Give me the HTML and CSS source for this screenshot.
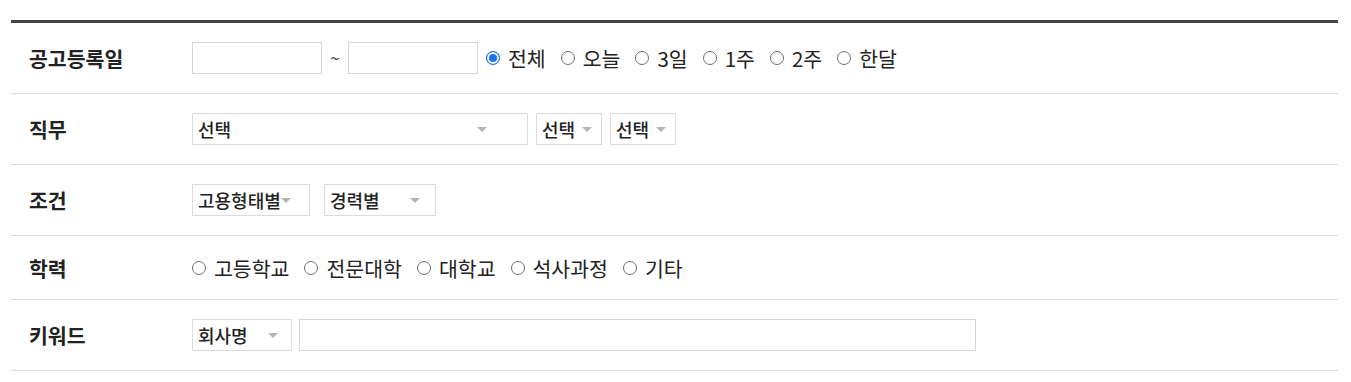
FILE: index.html
```html
<!DOCTYPE html>
<html lang="ko">
<head>
<meta charset="utf-8">
<title>채용공고 검색</title>
<link rel="stylesheet" href="styles.css">
</head>
<body>
<div class="wrap">
  <div class="search">
    <div class="row">
      <div class="label">공고등록일</div>
      <div class="field">
        <input class="date" type="text">
        <span class="tilde">~</span>
        <input class="date" type="text">
        <div class="radios">
          <label class="opt"><span class="radio on"></span>전체</label>
          <label class="opt"><span class="radio"></span>오늘</label>
          <label class="opt"><span class="radio"></span>3일</label>
          <label class="opt"><span class="radio"></span>1주</label>
          <label class="opt"><span class="radio"></span>2주</label>
          <label class="opt"><span class="radio"></span>한달</label>
        </div>
      </div>
    </div>
    <div class="row">
      <div class="label">직무</div>
      <div class="field gap8">
        <div class="select w-job"><span>선택</span><i class="arrow"></i></div>
        <div class="select w-sm"><span>선택</span><i class="arrow"></i></div>
        <div class="select w-sm"><span>선택</span><i class="arrow"></i></div>
      </div>
    </div>
    <div class="row">
      <div class="label">조건</div>
      <div class="field gap14">
        <div class="select w-type"><span>고용형태별</span><i class="arrow tight"></i></div>
        <div class="select w-career"><span>경력별</span><i class="arrow"></i></div>
      </div>
    </div>
    <div class="row short">
      <div class="label">학력</div>
      <div class="field">
        <div class="radios first">
          <label class="opt"><span class="radio"></span>고등학교</label>
          <label class="opt"><span class="radio"></span>전문대학</label>
          <label class="opt"><span class="radio"></span>대학교</label>
          <label class="opt"><span class="radio"></span>석사과정</label>
          <label class="opt"><span class="radio"></span>기타</label>
        </div>
      </div>
    </div>
    <div class="row">
      <div class="label">키워드</div>
      <div class="field gap7">
        <div class="select w-company"><span>회사명</span><i class="arrow"></i></div>
        <input class="keyword" type="text">
      </div>
    </div>
  </div>
</div>
</body>
</html>
```

FILE: styles.css
```css
* { box-sizing: border-box; }
html, body { margin: 0; padding: 0; background: #fff; }
body {
  font-family: "Noto Sans CJK KR", "Noto Sans", sans-serif;
  color: #222;
}
.wrap { padding: 20px 13px 0 11px; }
.search { border-top: 3px solid #444; }
.row {
  display: grid;
  grid-template-columns: 181px 1fr;
  align-items: center;
  padding: 19px 0;
  border-bottom: 1px solid #ddd;
  min-height: 71px;
}
.row.short { min-height: 64px; padding: 0; }
.label {
  padding-left: 18px;
  font-size: 20.5px;
  font-weight: 700;
  color: #222;
  line-height: 26px;
}
.field { display: flex; align-items: center; }
.gap8 { gap: 8px; }
.gap14 { gap: 14px; }
.gap7 { gap: 7px; }
input { font: inherit; margin: 0; outline: none; }
.date {
  width: 130px; height: 32px;
  border: 1px solid #d6d6d6;
  background: #fff;
}
.tilde {
  width: 26px; text-align: center;
  font-size: 17px; color: #333;
  line-height: 26px;
}
.radios { display: flex; align-items: center; margin-left: 8px; }
.radios.first { margin-left: 0; }
.opt {
  display: flex; align-items: center;
  font-size: 20.5px; color: #222;
  line-height: 26px;
  margin-right: 15px;
}
.radio {
  width: 14px; height: 14px;
  border: 1px solid #6e6e6e;
  border-radius: 50%;
  background: #fff;
  margin-right: 8px;
  flex: none;
}
.radio.on {
  border-color: #1a73e8;
  background: #1a73e8;
  box-shadow: inset 0 0 0 2px #fff;
}
.select {
  display: flex; align-items: center;
  height: 32px;
  border: 1px solid #dcdcdc;
  background: #fff;
  padding: 0 10px 0 5px;
  font-size: 18px;
  font-weight: 500;
  color: #222;
  white-space: nowrap;
}
.select span { line-height: 30px; }
.arrow {
  margin-left: auto;
  width: 0; height: 0;
  border-left: 5px solid transparent;
  border-right: 5px solid transparent;
  border-top: 5px solid #b4b4b4;
  flex: none;
}
.arrow.tight { margin-left: 0; }
.w-job { width: 336px; padding-right: 40px; }
.w-sm { width: 66px; padding-right: 9px; }
.w-type { width: 118px; padding-right: 0; }
.w-career { width: 112px; padding-right: 15px; }
.w-company { width: 100px; padding-right: 13px; }
.keyword {
  width: 677px; height: 32px;
  border: 1px solid #d6d6d6;
  background: #fff;
}
```
